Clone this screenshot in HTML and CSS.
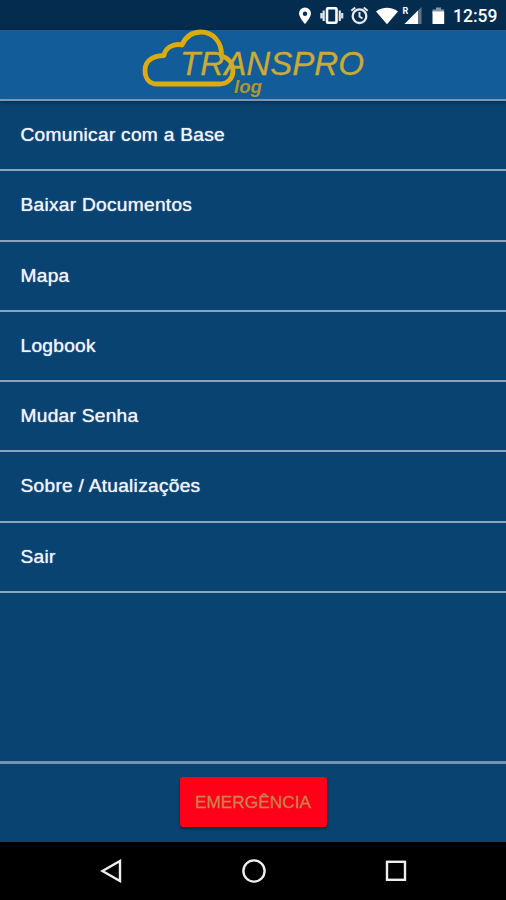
FILE: index.html
```html
<!DOCTYPE html>
<html lang="pt-BR">
<head>
    <meta charset="UTF-8">
    <meta name="viewport" content="width=device-width, initial-scale=1.0">
    <title>Transpro Log</title>
    <link rel="stylesheet" href="styles.css">
</head>
<body>
    <div class="status-bar">
        <svg class="status-icons" viewBox="0 0 150 30" width="150" height="30">
            <!-- location -->
            <path fill="#fff" fill-rule="evenodd" d="M5 7.500a6 6 0 0 1 6 6c0 4-6 10.500-6 10.500s-6-6.500-6-10.500a6 6 0 0 1 6-6zm0 4a2.200 2.200 0 1 0 0 4.400a2.200 2.200 0 1 0 0-4.400z"/>
            <!-- vibrate -->
            <rect x="27" y="8.300" width="9.500" height="14.500" rx="1" fill="none" stroke="#fff" stroke-width="2.600"/>
            <path d="M23.700 10.500v10.500M39.800 10.500v10.500M21.400 13v5.500M42.200 13v5.500" stroke="#dde4ea" stroke-width="2.200"/>
            <!-- alarm -->
            <circle cx="59.500" cy="16.200" r="6.800" fill="none" stroke="#e4e9ee" stroke-width="2.300"/>
            <path d="M59.500 12v4.500l3 2M51.300 10.800l4-3.300M67.700 10.800l-4-3.300" fill="none" stroke="#e4e9ee" stroke-width="1.900"/>
            <!-- wifi -->
            <path fill="#fff" d="M76 11.500c6.500-5 15.500-5 22 0L87 24.300z"/>
            <!-- signal -->
            <path fill="#5d7488" d="M121.500 7v17h-17z"/>
            <path fill="#fff" d="M118 10.500v13.500h-13.500z"/>
            <text class="roaming" x="102.500" y="13.500">R</text>
            <!-- battery -->
            <path fill="#8797a7" d="M136 7.500h5v2h3v4h-11.500v-4h3.500z"/>
            <path fill="#fff" d="M132.500 11.500h11.700v12.500h-11.700z"/>
        </svg>
        <span class="clock">12:59</span>
    </div>

    <header class="header">
        <svg class="logo" viewBox="0 0 226 69" width="226" height="69">
            <path class="cloud" d="M17 54H79C88 54 93 48 93 41C93 34 89 28 81.500 26C82 12 73 2 61 2C51 2 45 8 42 15C33 13 25 18 24 25.500C12 26 5 31 5 40C5 49 10 54 17 54z"/>
            <text class="brand" x="40" y="45.300" textLength="184" lengthAdjust="spacingAndGlyphs">TRANSPRO</text>
            <text class="brand-sub" x="94" y="62.500" textLength="28" lengthAdjust="spacingAndGlyphs">log</text>
        </svg>
    </header>

    <main class="content">
        <ul class="menu">
            <li>Comunicar com a Base</li>
            <li>Baixar Documentos</li>
            <li>Mapa</li>
            <li>Logbook</li>
            <li>Mudar Senha</li>
            <li>Sobre / Atualizações</li>
            <li>Sair</li>
        </ul>
    </main>

    <footer class="footer">
        <button type="button" class="emergency">EMERGÊNCIA</button>
    </footer>

    <nav class="nav-bar">
        <svg viewBox="0 0 24 24" width="24" height="24"><path d="M20 2v20L2.500 12z"/></svg>
        <svg viewBox="0 0 24 24" width="24" height="24"><circle cx="12" cy="12" r="10.600"/></svg>
        <svg viewBox="0 0 24 24" width="24" height="24"><rect x="3" y="2.800" width="18" height="18"/></svg>
    </nav>
</body>
</html>
```

FILE: styles.css
```css
* {
    box-sizing: border-box;
}
body {
    margin: 0;
    height: 100vh;
    display: flex;
    flex-direction: column;
    overflow: hidden;
    background-color: #094371;
    font-family: "Liberation Sans", Arial, sans-serif;
}
.status-bar {
    height: 30px;
    flex: none;
    display: flex;
    justify-content: flex-end;
    align-items: center;
    padding-right: 9px;
    background-color: #042c4f;
}
.status-icons {
    overflow: visible;
    margin-right: 3px;
}
.roaming {
    font: bold 9px Roboto, sans-serif;
    fill: #fff;
}
.clock {
    font: 500 17.5px/30px Roboto, sans-serif;
    color: #fff;
    width: 44px;
    white-space: nowrap;
    padding-top: 2px;
}
.header {
    height: 71px;
    flex: none;
    display: flex;
    justify-content: center;
    background-color: #125c99;
    border-bottom: 2px solid #7c97b5;
    box-shadow: 0 1px 4px rgba(0, 0, 0, 0.4);
}
.logo {
    overflow: visible;
}
.cloud {
    fill: none;
    stroke: #dcab0c;
    stroke-width: 4.8;
    stroke-linejoin: round;
}
.brand {
    font-size: 34px;
    font-style: italic;
    fill: #cbaa35;
    stroke: #cbaa35;
    stroke-width: 0.3;
}
.brand-sub {
    font-size: 19px;
    font-style: italic;
    font-weight: bold;
    fill: #ae962e;
}
.content {
    flex: 1;
}
.menu {
    list-style: none;
    margin: 0;
    padding: 0;
}
.menu li {
    height: 70.3px;
    padding-left: 20.5px;
    line-height: 68px;
    font-size: 19.2px;
    letter-spacing: 0.25px;
    color: #eef2fa;
    text-shadow: 0 0 1px #eef2fa;
    border-bottom: 2px solid #8ea3bd;
}
.footer {
    height: 81px;
    flex: none;
    display: flex;
    justify-content: center;
    align-items: flex-start;
    padding-top: 13px;
    border-top: 3px solid #7890b0;
}
.emergency {
    width: 147px;
    height: 50px;
    margin: 0;
    padding: 0;
    border: none;
    border-radius: 3px;
    background-color: #ff0018;
    color: #d08050;
    font-family: inherit;
    font-size: 17.3px;
    cursor: pointer;
    box-shadow: 0 2px 3px rgba(0, 0, 0, 0.4);
    -webkit-text-stroke: 0.3px #d08050;
}
.nav-bar {
    height: 58px;
    flex: none;
    display: flex;
    justify-content: space-between;
    align-items: center;
    padding: 0 98px 0 100px;
    background-color: #000;
}
.nav-bar svg {
    fill: none;
    stroke: #eee;
    stroke-width: 2.4;
}
```
